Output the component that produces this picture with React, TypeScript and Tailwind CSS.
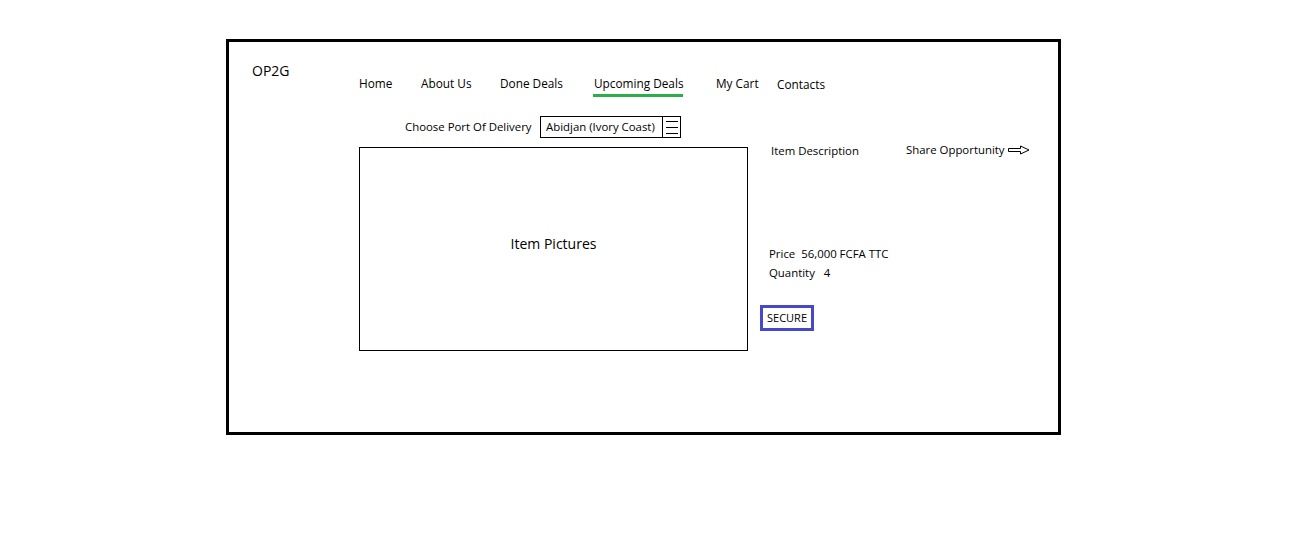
import React from "react";

const font = { fontFamily: '"Open Sans", "Noto Sans", sans-serif' };

function NavItem({ label, w, active, extra }: { label: string; w: string; active?: boolean; extra?: string }) {
  return (
    <div className={`${w} shrink-0 ${extra ?? ""}`}>
      <div className="text-[11.8px] leading-[14px] text-black whitespace-nowrap">{label}</div>
      {active && <div className="mt-[4px] -ml-[1px] w-[90px] h-[3px] bg-[#2aae4a]" />}
    </div>
  );
}

function ArrowIcon() {
  return (
    <svg width="22" height="10" viewBox="0 0 22 10" className="ml-[3px]">
      <path d="M0.5 3.5 H12.5 V1 L21 5 L12.5 9 V6.5 H0.5 Z" fill="white" stroke="black" strokeWidth="1" />
    </svg>
  );
}

export default function App() {
  return (
    <div className="w-[1315px] h-[538px] bg-white pl-[226px] pt-[39px]" style={font}>
      <div className="w-[835px] h-[396px] border-[3px] border-black flex flex-col">
        {/* header */}
        <div className="flex items-start pt-[20px]">
          <div className="ml-[23px] w-[107px] text-[14px] leading-[18px] text-black">OP2G</div>
          <div className="flex items-start pt-[14px]">
            <NavItem label="Home" w="w-[62px]" />
            <NavItem label="About Us" w="w-[79px]" />
            <NavItem label="Done Deals" w="w-[94px]" />
            <NavItem label="Upcoming Deals" w="w-[122px]" active />
            <NavItem label="My Cart" w="w-[61px]" />
            <NavItem label="Contacts" w="w-[70px]" extra="pt-[1px]" />
          </div>
        </div>

        {/* port row */}
        <div className="flex items-center ml-[176px] mt-[19px]">
          <div className="w-[135px] text-[11.4px] leading-[14px] text-black whitespace-nowrap">Choose Port Of Delivery</div>
          <div className="flex h-[22px] w-[141px] border border-black">
            <div className="flex-1 flex items-center pl-[5px] text-[11.4px] text-black whitespace-nowrap">Abidjan (Ivory Coast)</div>
            <div className="w-[18px] border-l border-black flex flex-col justify-center items-center gap-[5px]">
              <div className="w-[12px] h-[1px] bg-black" />
              <div className="w-[12px] h-[1px] bg-black" />
              <div className="w-[12px] h-[1px] bg-black" />
            </div>
          </div>
        </div>

        {/* content */}
        <div className="flex ml-[130px] mt-[9px]">
          <div className="w-[389px] h-[204px] border border-black flex items-center justify-center">
            <span className="text-[14px] text-black -mt-[12px]">Item Pictures</span>
          </div>
          <div className="flex flex-col ml-[12px] w-[290px]">
            <div className="flex items-start mt-[-3px]">
              <div className="ml-[11px] w-[135px] text-[11.4px] leading-[14px] text-black">Item Description</div>
              <div className="flex items-center -mt-[1px]">
                <span className="text-[11.4px] leading-[14px] text-black whitespace-nowrap">Share Opportunity</span>
                <ArrowIcon />
              </div>
            </div>
            <div className="ml-[9px] mt-[89px] text-[11.4px] leading-[14px] text-black whitespace-nowrap">Price&nbsp;&nbsp;56,000 FCFA TTC</div>
            <div className="ml-[9px] mt-[5px] text-[11.4px] leading-[14px] text-black whitespace-nowrap">Quantity&nbsp;&nbsp;&nbsp;4</div>
            <div className="mt-[25px] w-[54px] h-[26px] border-[3px] border-[#4747cc] flex items-center justify-center text-[11px] text-black">SECURE</div>
          </div>
        </div>
      </div>
    </div>
  );
}
